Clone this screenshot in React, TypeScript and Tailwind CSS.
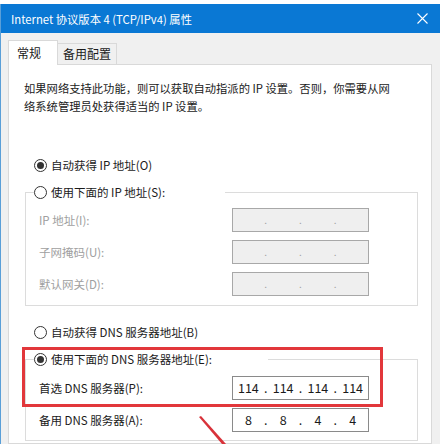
import React from 'react';

const Radio: React.FC<{ checked?: boolean }> = ({ checked }) => (
  <span className="flex h-[13px] w-[13px] shrink-0 items-center justify-center rounded-full border border-[#333333] bg-white">
    {checked && <span className="h-[7px] w-[7px] rounded-full bg-[#333333]" />}
  </span>
);

const IpBox: React.FC<{ parts?: string[]; disabled?: boolean }> = ({ parts = ['', '', '', ''], disabled }) => (
  <div
    className={`grid h-[24px] w-[137px] grid-cols-[1fr_auto_1fr_auto_1fr_auto_1fr] items-center border text-[12.5px] ${
      disabled ? 'border-[#a8a8a8] bg-[#efefef] text-[#a0a0a0]' : 'border-[#8a8a8a] bg-white text-[#1a1a1a]'
    }`}
  >
    {parts.map((p, i) => (
      <React.Fragment key={i}>
        <span className="text-center">{p}</span>
        {i < 3 && <span className={`w-[4px] text-center ${disabled ? 'text-[10px]' : ''}`}>.</span>}
      </React.Fragment>
    ))}
  </div>
);

const FieldRow: React.FC<{ label: string; disabled?: boolean; parts?: string[] }> = ({ label, disabled, parts }) => (
  <div className="flex h-[24px] items-center">
    <span className={`w-[206px] pl-[13px] ${disabled ? 'text-[#a0a0a0]' : 'text-[#1a1a1a]'}`}>{label}</span>
    <IpBox disabled={disabled} parts={parts} />
  </div>
);

export default function App() {
  return (
    <div className="relative h-[444px] w-[440px] overflow-hidden bg-white font-['Noto_Sans_CJK_SC',sans-serif] text-[11.5px] leading-[18px] text-[#1a1a1a]">
      <div className="h-[4px] bg-white" />
      <div className="flex h-[440px] flex-col border-l border-[#5a9fd8] bg-[#f0f0f0]">
        {/* title bar */}
        <div className="flex h-[29px] shrink-0 items-center justify-between bg-[#0a78d4] pl-[10px] pr-[9px] text-[11.3px] text-white">
          <span className="whitespace-nowrap">Internet 协议版本 4 (TCP/IPv4) 属性</span>
          <svg width="11" height="11" viewBox="0 0 11 11" className="mr-[3px]">
            <path d="M0.5 0.5 L10.5 10.5 M10.5 0.5 L0.5 10.5" stroke="white" strokeWidth="1.1" fill="none" />
          </svg>
        </div>

        <div className="flex flex-1 flex-col pl-[7px] pr-[8px] pt-[7px]">
          {/* tabs */}
          <div className="flex h-[24px] items-end">
            <div className="relative z-10 -mb-px h-[25px] w-[50px] border border-b-0 border-[#d9d9d9] bg-white pl-[8px] pt-[3px] text-[12px]">
              常规
            </div>
            <div className="h-[21px] border border-b-0 border-l-0 border-[#d9d9d9] bg-[#f0f0f0] px-[5px] pt-[1px] text-[12px]">
              备用配置
            </div>
          </div>

          {/* panel */}
          <div className="flex-1 border border-[#d9d9d9] bg-white pl-[15px] pr-[13px] pt-[14px]">
            <p className="whitespace-nowrap text-[11.3px]">
              如果网络支持此功能，则可以获取自动指派的 IP 设置。否则，你需要从网
              <br />
              络系统管理员处获得适当的 IP 设置。
            </p>

            <div className="mt-[41px] flex h-[18px] items-center gap-[4px] pl-[10px]">
              <Radio checked />
              <span>自动获得 IP 地址(O)</span>
            </div>

            <fieldset className="ml-[1px] mt-[9px] border border-[#dcdcdc] pb-[9px]">
              <legend className="ml-[8px] flex h-[18px] w-[191px] items-center gap-[4px] bg-white">
                <Radio />
                <span>使用下面的 IP 地址(S):</span>
              </legend>
              <div className="flex flex-col gap-[8px] pt-[7px]">
                <FieldRow label="IP 地址(I):" disabled />
                <FieldRow label="子网掩码(U):" disabled />
                <FieldRow label="默认网关(D):" disabled />
              </div>
            </fieldset>

            <div className="mt-[17px] flex h-[18px] items-center gap-[4px] pl-[10px]">
              <Radio />
              <span>自动获得 DNS 服务器地址(B)</span>
            </div>

            <fieldset className="ml-[1px] mt-[9px] border border-[#dcdcdc] pb-[8px]">
              <legend className="ml-[8px] flex h-[18px] w-[234px] items-center gap-[4px] bg-white">
                <Radio checked />
                <span>使用下面的 DNS 服务器地址(E):</span>
              </legend>
              <div className="flex flex-col gap-[8px] pt-[8px]">
                <FieldRow label="首选 DNS 服务器(P):" parts={['114', '114', '114', '114']} />
                <FieldRow label="备用 DNS 服务器(A):" parts={['8', '8', '4', '4']} />
              </div>
            </fieldset>
          </div>
        </div>
      </div>

      {/* annotation overlay */}
      <div className="pointer-events-none absolute left-[22px] top-[347px] h-[60px] w-[361px] border-[3px] border-[#e2373b]" />
      <svg className="pointer-events-none absolute left-0 top-0" width="440" height="444">
        <polygon points="199,417 201,416 226,444 222,444" fill="#d8323a" />
      </svg>
    </div>
  );
}
